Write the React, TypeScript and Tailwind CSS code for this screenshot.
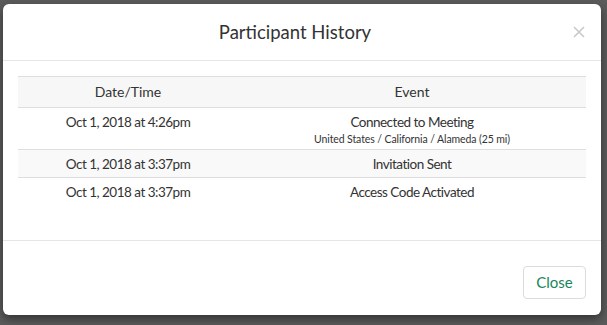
import React from "react";

const EVENTS = [
  {
    time: "Oct 1, 2018 at 4:26pm",
    event: "Connected to Meeting",
    detail: "United States / California / Alameda (25 mi)",
  },
  { time: "Oct 1, 2018 at 3:37pm", event: "Invitation Sent" },
  { time: "Oct 1, 2018 at 3:37pm", event: "Access Code Activated" },
];

export default function App() {
  return (
    <div
      className="w-[607px] h-[325px] bg-[#5b5b5b] pt-[4px] pl-[3px] overflow-hidden"
      style={{ fontFamily: "Lato, 'Open Sans', sans-serif" }}
    >
      <div className="w-[598px] h-[311px] bg-white rounded-[6px] shadow-[0_4px_10px_rgba(0,0,0,0.45)] flex flex-col">
        {/* Header */}
        <div className="flex items-center px-[15px] py-[15px] border-b border-[#e5e5e5]">
          <h2 className="flex-1 text-center text-[18.5px] leading-[26px] text-[#333]">
            Participant History
          </h2>
          <button className="w-[14px] h-[14px] flex items-center justify-center">
            <svg width="12" height="12" viewBox="0 0 12 12">
              <path d="M1 1L11 11M11 1L1 11" stroke="#c9c9c9" strokeWidth="1.6" />
            </svg>
          </button>
        </div>

        {/* Body */}
        <div className="flex-1 px-[15px] pt-[15px]">
          <table className="w-full border-collapse text-[13.5px] tracking-[-0.5px] text-[#333]">
            <thead>
              <tr className="bg-[#f7f7f7] border-t border-b border-[#dedede]">
                <th className="w-[220px] font-normal text-[14px] tracking-normal leading-[20px] py-[5px] text-center">
                  Date/Time
                </th>
                <th className="font-normal text-[14px] tracking-normal leading-[20px] py-[5px] text-center">
                  Event
                </th>
              </tr>
            </thead>
            <tbody>
              {EVENTS.map((e, i) => (
                <tr
                  key={i}
                  className={`${i % 2 === 1 ? "bg-[#f9f9f9]" : "bg-white"} ${
                    i < EVENTS.length - 1 ? "border-b border-[#dedede]" : ""
                  }`}
                >
                  <td className="align-top text-center leading-[20px] pt-[4px] pb-[3px]">{e.time}</td>
                  <td className="align-top text-center leading-[20px] pt-[4px] pb-[3px]">
                    <div>{e.event}</div>
                    {e.detail && (
                      <div className="text-[10.5px] tracking-[-0.1px] leading-[14px]">{e.detail}</div>
                    )}
                  </td>
                </tr>
              ))}
            </tbody>
          </table>
        </div>

        {/* Footer */}
        <div className="flex justify-end border-t border-[#e5e5e5] px-[15px] pt-[25px] pb-[16px]">
          <button className="w-[63px] h-[33px] rounded-[4px] border border-[#dcdcdc] bg-white text-[15px] text-[#17875a]">
            Close
          </button>
        </div>
      </div>
    </div>
  );
}
